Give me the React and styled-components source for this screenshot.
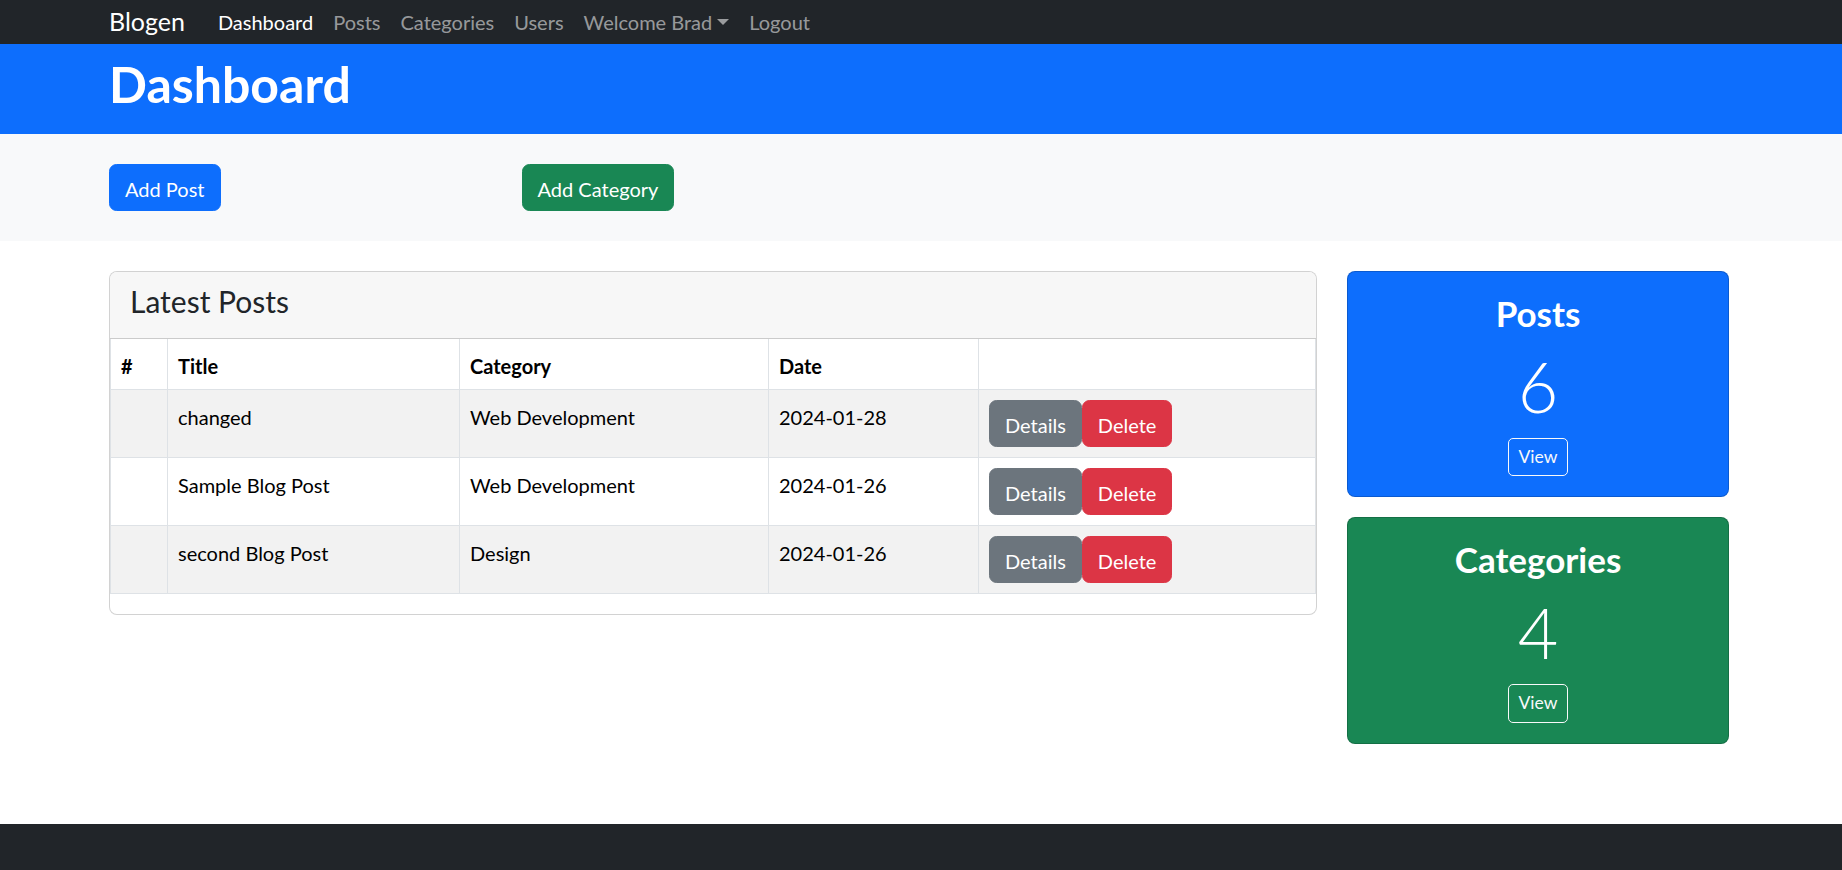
import React from "react";
import styled, { createGlobalStyle } from "styled-components";

const GlobalStyle = createGlobalStyle`
  body {
    margin: 0;
    font-family: "Lato", "Open Sans", sans-serif;
    font-size: 20px;
    line-height: 1.5;
    color: #212529;
    background: #fff;
  }
  * { box-sizing: border-box; }
`;

const Container = styled.div`
  max-width: 1654px;
  margin: 0 auto;
  padding: 0 19px 0 15px;
`;

const Navbar = styled.nav`
  background: #212529;
  height: 44px;
`;

const NavInner = styled(Container)`
  display: flex;
  align-items: center;
  height: 100%;
`;

const Brand = styled.a`
  font-size: 25px;
  color: #fff;
  margin-right: 23px;
  text-decoration: none;
`;

const NavLink = styled.a`
  padding: 0 10px;
  color: ${p => (p.active ? "#fff" : "rgba(255,255,255,0.55)")};
  text-decoration: none;
  display: flex;
  align-items: center;
`;

const Caret = styled.span`
  display: inline-block;
  margin-left: 5px;
  border-top: 6px solid currentColor;
  border-left: 6px solid transparent;
  border-right: 6px solid transparent;
`;

const Header = styled.header`
  background: #0d6efd;
  color: #fff;
  padding: 10px 0;
`;

const Title = styled.h1`
  margin: 0 0 10px;
  font-size: 50px;
  line-height: 1.2;
  font-weight: 700;
`;

const Actions = styled.section`
  background: #f8f9fa;
  padding: 30px 0;
`;

const ActionGrid = styled.div`
  display: grid;
  grid-template-columns: repeat(4, 1fr);
  column-gap: 30px;
  align-items: start;
  justify-items: start;
`;

const colors = {
  primary: "#0d6efd",
  success: "#198754",
  secondary: "#6c757d",
  danger: "#dc3545",
};

const Button = styled.button`
  font-family: inherit;
  font-size: 20px;
  line-height: 30px;
  padding: 8.5px 15px 6.5px;
  border: 1.25px solid ${p => colors[p.variant]};
  background: ${p => colors[p.variant]};
  color: #fff;
  border-radius: 7.5px;
  cursor: pointer;
`;

const Main = styled.main`
  padding: 30px 0 80px;
`;

const MainGrid = styled.div`
  display: grid;
  grid-template-columns: 1fr 382px;
  column-gap: 30px;
  align-items: start;
`;

const Card = styled.div`
  border: 1.25px solid rgba(0, 0, 0, 0.175);
  border-radius: 8px;
  overflow: hidden;
  background: #fff;
`;

const CardHeader = styled.div`
  background: #f7f7f7;
  padding: 11px 20px 9px;
  border-bottom: 1.25px solid rgba(0, 0, 0, 0.175);
`;

const CardTitle = styled.h4`
  margin: 0 0 10px;
  font-size: 30px;
  line-height: 1.2;
  font-weight: 400;
`;

const Table = styled.table`
  width: 100%;
  border-collapse: collapse;
  margin-bottom: 20px;
  color: #000;
`;

const Th = styled.th`
  text-align: left;
  font-weight: 700;
  padding: 12px 10px 8px;
  vertical-align: bottom;
  border: 1px solid #dee2e6;
  border-top: 0;
`;

const Row = styled.tr`
  background: ${p => (p.striped ? "#f2f2f2" : "#fff")};
`;

const Td = styled.td`
  padding: 10px;
  vertical-align: top;
  border: 1px solid #dee2e6;
`;

const CellText = styled.div`
  padding-top: 2px;
`;

const BtnGroup = styled.div`
  display: flex;
`;

const Sidebar = styled.div`
  display: flex;
  flex-direction: column;
  gap: 20px;
`;

const StatCard = styled.div`
  background: ${p => colors[p.variant]};
  border: 1.25px solid rgba(0, 0, 0, 0.175);
  border-radius: 8px;
  color: #fff;
  text-align: center;
  padding: 20px;
`;

const StatTitle = styled.h3`
  margin: 0 0 10px;
  font-size: 35px;
  line-height: 1.2;
  font-weight: 700;
`;

const StatNumber = styled.h4`
  margin: 0 0 10px;
  font-size: 70px;
  line-height: 1.2;
  font-weight: 300;
`;

const ViewButton = styled.a`
  display: inline-block;
  font-size: 17.5px;
  line-height: 1.5;
  padding: 5px 10px;
  border: 1.25px solid #f8f9fa;
  border-radius: 5px;
  color: #f8f9fa;
  text-decoration: none;
`;

const Footer = styled.footer`
  background: #212529;
  height: 140px;
`;

const posts = [
  { title: "changed", category: "Web Development", date: "2024-01-28" },
  { title: "Sample Blog Post", category: "Web Development", date: "2024-01-26" },
  { title: "second Blog Post", category: "Design", date: "2024-01-26" },
];

const widths = [57, 292, 309, 210];

export default function App() {
  return (
    <>
      <GlobalStyle />
      <Navbar>
        <NavInner>
          <Brand href="#">Blogen</Brand>
          <NavLink active href="#">Dashboard</NavLink>
          <NavLink href="#">Posts</NavLink>
          <NavLink href="#">Categories</NavLink>
          <NavLink href="#">Users</NavLink>
          <NavLink href="#">Welcome Brad<Caret /></NavLink>
          <NavLink href="#">Logout</NavLink>
        </NavInner>
      </Navbar>
      <Header>
        <Container>
          <Title>Dashboard</Title>
        </Container>
      </Header>
      <Actions>
        <Container>
          <ActionGrid>
            <Button variant="primary">Add Post</Button>
            <Button variant="success">Add Category</Button>
          </ActionGrid>
        </Container>
      </Actions>
      <Main>
        <Container>
          <MainGrid>
            <Card>
              <CardHeader>
                <CardTitle>Latest Posts</CardTitle>
              </CardHeader>
              <Table>
                <colgroup>
                  {widths.map((w, i) => <col key={i} style={{ width: w }} />)}
                  <col />
                </colgroup>
                <thead>
                  <tr>
                    <Th>#</Th>
                    <Th>Title</Th>
                    <Th>Category</Th>
                    <Th>Date</Th>
                    <Th></Th>
                  </tr>
                </thead>
                <tbody>
                  {posts.map((p, i) => (
                    <Row key={i} striped={i % 2 === 0}>
                      <Td></Td>
                      <Td><CellText>{p.title}</CellText></Td>
                      <Td><CellText>{p.category}</CellText></Td>
                      <Td><CellText>{p.date}</CellText></Td>
                      <Td>
                        <BtnGroup>
                          <Button variant="secondary">Details</Button>
                          <Button variant="danger">Delete</Button>
                        </BtnGroup>
                      </Td>
                    </Row>
                  ))}
                </tbody>
              </Table>
            </Card>
            <Sidebar>
              <StatCard variant="primary">
                <StatTitle>Posts</StatTitle>
                <StatNumber>6</StatNumber>
                <ViewButton href="#">View</ViewButton>
              </StatCard>
              <StatCard variant="success">
                <StatTitle>Categories</StatTitle>
                <StatNumber>4</StatNumber>
                <ViewButton href="#">View</ViewButton>
              </StatCard>
            </Sidebar>
          </MainGrid>
        </Container>
      </Main>
      <Footer />
    </>
  );
}
